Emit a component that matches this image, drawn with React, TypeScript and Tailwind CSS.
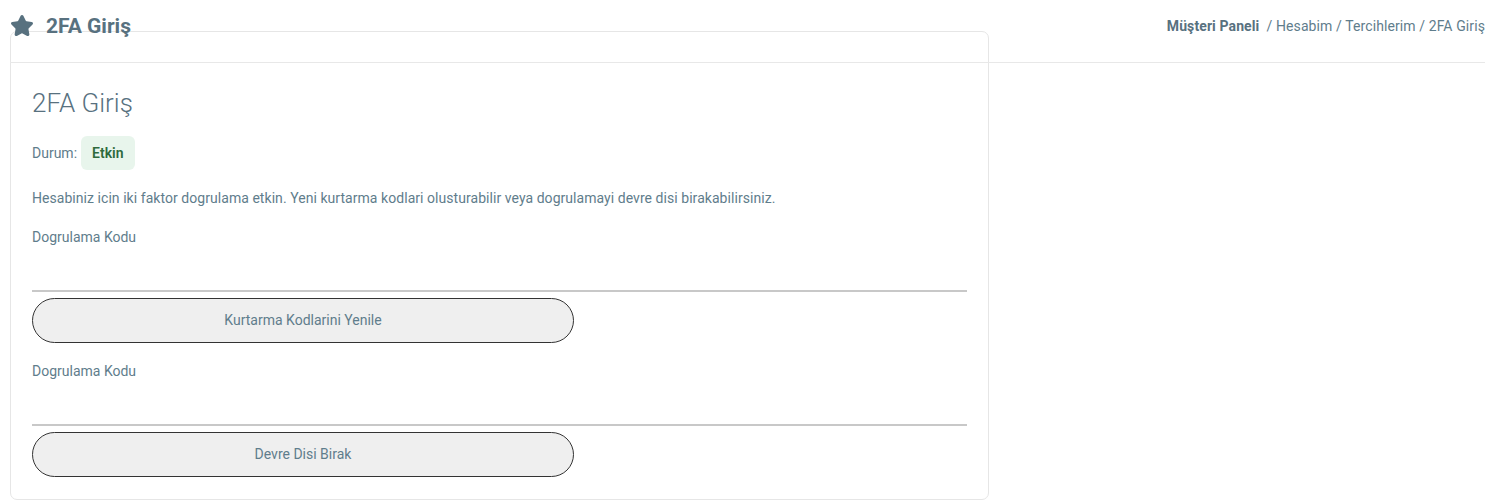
import React from "react";
import { Star } from "lucide-react";

const font = { fontFamily: "Roboto, 'Open Sans', sans-serif" };

function CodeField({ button }: { button: string }) {
  return (
    <div className="flex flex-col">
      <label className="text-[14px] leading-[20px] text-[#5f7d8c]">Dogrulama Kodu</label>
      <div className="h-[45px] border-b-2 border-[#c8c8c8]" />
      <button className="mt-[6px] w-[542px] h-[45px] rounded-full border border-[#333] bg-[#efefef] text-[14px] text-[#5f7d8c]">
        {button}
      </button>
    </div>
  );
}

export default function App() {
  return (
    <div className="bg-white w-[1494px] h-[504px] overflow-hidden" style={font}>
      <div className="relative z-10 mx-[10px] mr-[9px] h-[63px] border-b border-[#e8e8e8] flex items-start justify-between pt-[12px]">
        <div className="flex items-center gap-[12px] text-[#58717f]">
          <Star size={24} fill="currentColor" strokeWidth={2} />
          <span className="text-[21px] font-bold leading-[28px]">2FA Giriş</span>
        </div>
        <div className="text-[14px] tracking-[0.1px] leading-[28px] text-[#5f7d8c]">
          <span className="font-bold text-[#58717f]">Müşteri Paneli</span>
          <span>&nbsp; / Hesabim / Tercihlerim / 2FA Giriş</span>
        </div>
      </div>
      <div className="ml-[10px] -mt-[32px] w-[979px] h-[469px] rounded-[7px] border border-[#e6e6e6] pt-[54px] px-[21px]">
        <h1 className="text-[26px] leading-[34px] font-light text-[#58717f]">2FA Giriş</h1>
        <div className="mt-[16px] flex items-center gap-[4px]">
          <span className="text-[14px] text-[#5f7d8c]">Durum:</span>
          <span className="h-[34px] px-[11px] flex items-center rounded-[6px] bg-[#e8f5ec] text-[14px] font-semibold text-[#2e6a3c]">
            Etkin
          </span>
        </div>
        <p className="mt-[18px] text-[14px] tracking-[0.05px] leading-[20px] text-[#5f7d8c]">
          Hesabiniz icin iki faktor dogrulama etkin. Yeni kurtarma kodlari olusturabilir veya dogrulamayi devre disi birakabilirsiniz.
        </p>
        <div className="mt-[19px]">
          <CodeField button="Kurtarma Kodlarini Yenile" />
        </div>
        <div className="mt-[18px]">
          <CodeField button="Devre Disi Birak" />
        </div>
      </div>
    </div>
  );
}
